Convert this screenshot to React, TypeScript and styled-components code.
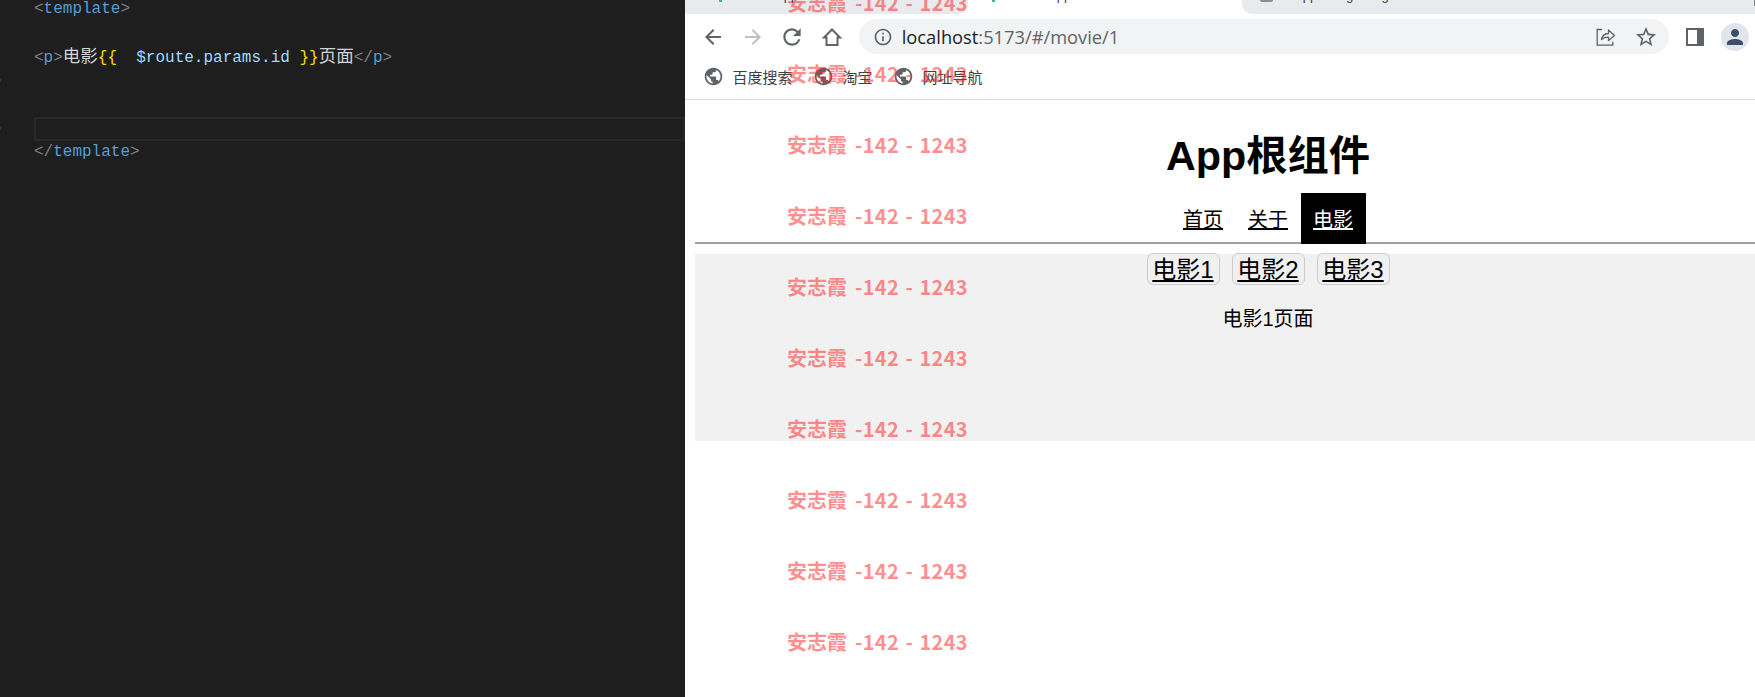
import React from 'react';
import styled, { createGlobalStyle } from 'styled-components';
import { MdArrowBack, MdArrowForward, MdInfoOutline, MdPerson, MdPublic, MdRefresh, MdStarBorder } from 'react-icons/md';

const CJK = '"Noto Sans CJK SC", sans-serif';

const GlobalStyle = createGlobalStyle`
  html, body {
    margin: 0;
    height: 100%;
    overflow: hidden;
    background: #fff;
  }
  #root {
    height: 100%;
  }
`;

const Screen = styled.div`
  position: relative;
  display: flex;
  width: 1755px;
  height: 697px;
  overflow: hidden;
`;

/* code editor */
const Editor = styled.div`
  flex: 0 0 685px;
  background: #1e1e1e;
  padding: 0 0 0 34px;
  box-sizing: border-box;
  font-family: "Liberation Mono", ${CJK};
  font-size: 16px;
  overflow: hidden;
`;

const CodeLines = styled.div`
  margin-top: -2px;
`;

const CodeLine = styled.div<{ $current?: boolean; $mark?: boolean }>`
  position: relative;
  height: 23.8px;
  line-height: 23.8px;
  white-space: pre;
  color: #d4d4d4;
  ${(p) => p.$current && 'outline: 2px solid #282828; outline-offset: -2px;'}
  ${(p) =>
    p.$mark &&
    `&::before {
      content: '';
      position: absolute;
      left: -34px;
      top: 10px;
      width: 1px;
      height: 3px;
      background: #5a2626;
    }`}
`;

const Bracket = styled.span`
  color: #808080;
`;
const Tag = styled.span`
  color: #569cd6;
`;
const Mustache = styled.span`
  color: #ffd700;
`;
const Expr = styled.span`
  color: #9cdcfe;
`;
const Hanzi = styled.span`
  font-size: 17.5px;
`;

/* browser window */
const Browser = styled.div`
  flex: 1;
  min-width: 0;
  display: flex;
  flex-direction: column;
  background: #fff;
  font-family: "Liberation Sans", ${CJK};
`;

const TabStrip = styled.div`
  flex: 0 0 14px;
  display: flex;
  background: #fff;
  overflow: hidden;
`;

const Tab = styled.div<{ $inactive?: boolean; $width: number; $corner?: string }>`
  position: relative;
  flex: 0 0 ${(p) => p.$width}px;
  height: 14px;
  display: flex;
  align-items: flex-start;
  background: ${(p) => (p.$inactive ? '#e8eaed' : 'transparent')};
  border-radius: ${(p) => p.$corner || '0'};
  overflow: hidden;
`;

const TabTail = styled.div`
  flex: 1;
  height: 14px;
  background: #e8eaed;
  border-radius: 0 0 0 10px;
  overflow: hidden;
`;

const TabFavicon = styled.span<{ $offset: number }>`
  flex: none;
  width: 3px;
  height: 2px;
  margin-left: ${(p) => p.$offset}px;
  background: #41b883;
`;

const TabDot = styled.span`
  flex: none;
  width: 13px;
  height: 2px;
  margin-left: 18px;
  border-radius: 0 0 8px 8px;
  background: #8a8d91;
`;

/* only the descenders of the tab titles come into view */
const TabTitle = styled.span<{ $gap: number }>`
  flex: none;
  margin-left: ${(p) => p.$gap}px;
  margin-top: -12px;
  font-size: 13px;
  line-height: 15px;
  color: #3c4043;
  white-space: nowrap;
`;

const TabDivider = styled.span`
  position: absolute;
  right: 0;
  top: 0;
  width: 1px;
  height: 6px;
  background: #80868b;
`;

const Toolbar = styled.div`
  flex: 0 0 40px;
  display: flex;
  align-items: flex-start;
  padding: 5px 0 0 8px;
  box-sizing: border-box;
  height: 40px;
`;

const ToolButton = styled.div<{ $disabled?: boolean }>`
  flex: 0 0 39.7px;
  height: 35px;
  display: flex;
  align-items: center;
  justify-content: center;
  color: ${(p) => (p.$disabled ? '#bdc1c6' : '#5f6368')};
`;

const Omnibox = styled.div`
  flex: 1;
  height: 35px;
  margin-left: 7px;
  margin-right: 7px;
  padding: 0 3px 0 14px;
  display: flex;
  align-items: center;
  border-radius: 18px;
  background: #f1f3f4;
  color: #5f6368;
`;

const Url = styled.div`
  flex: 1;
  margin-left: 9px;
  font-family: "Open Sans", sans-serif;
  font-size: 18.3px;
  color: #5f6368;
  white-space: nowrap;
`;

const Host = styled.span`
  color: #202124;
`;

const Avatar = styled.div`
  width: 28px;
  height: 28px;
  border-radius: 50%;
  background: #e1e4ea;
  color: #3d4c68;
  display: flex;
  align-items: center;
  justify-content: center;
`;

const Bookmarks = styled.div`
  flex: 0 0 46px;
  display: flex;
  align-items: center;
  padding: 0 0 1px 17.5px;
  gap: 20px;
  box-sizing: border-box;
  border-bottom: 1px solid #dadce0;
`;

const Bookmark = styled.div`
  display: flex;
  align-items: center;
  gap: 9px;
  font-size: 15px;
  color: #3c4043;
  svg {
    color: #5f6368;
    flex: none;
  }
`;

const Page = styled.div`
  flex: 1;
  padding-left: 10px;
  overflow: hidden;
`;

const PageInner = styled.div`
  width: 1146px;
  text-align: center;
  color: #000;
`;

const Title = styled.h1`
  margin: 0;
  padding-top: 33px;
  font-size: 41.3px;
  line-height: 46px;
  font-weight: 700;
`;

const Nav = styled.nav`
  position: relative;
  z-index: 1;
  height: 49px;
  margin-top: 14px;
  display: flex;
  justify-content: center;
`;

const NavLink = styled.a<{ $active?: boolean }>`
  height: 51px;
  box-sizing: border-box;
  padding: 14px 12.5px 0;
  font-size: 20px;
  line-height: 26px;
  text-decoration: underline;
  color: ${(p) => (p.$active ? '#fff' : '#000')};
  background: ${(p) => (p.$active ? '#000' : 'transparent')};
`;

const Rule = styled.div`
  height: 2px;
  background: #a0a0a0;
`;

const Section = styled.section`
  height: 187px;
  margin-top: 10px;
  background: #f1f1f1;
`;

const SubNav = styled.div`
  display: flex;
  justify-content: center;
  gap: 12px;
  position: relative;
  top: -1px;
`;

const MovieButton = styled.a`
  box-sizing: border-box;
  width: 73px;
  height: 32px;
  border: 1px solid #ccc;
  border-radius: 6px;
  background: #f0f0f0;
  font-size: 24px;
  line-height: 31px;
  text-decoration: underline;
  color: #000;
`;

const MovieText = styled.p`
  margin: 20px 0 0;
  font-size: 20px;
  line-height: 26px;
  color: #000;
`;

/* repeated watermark lying over everything */
const Watermark = styled.div`
  position: absolute;
  left: 787px;
  top: -33px;
  pointer-events: none;
`;

const WatermarkRow = styled.div`
  height: 71px;
  line-height: 71px;
  font-family: "Noto Sans CJK SC", sans-serif;
  font-size: 20px;
  font-weight: 700;
  white-space: pre;
  word-spacing: 1.5px;
  color: rgba(255, 30, 30, 0.5);
`;

const WatermarkNumber = styled.span`
  margin-left: 2px;
  letter-spacing: 0.3px;
`;

const HomeIcon = () => (
  <svg width="22" height="22" viewBox="0 0 22 22" fill="none" stroke="currentColor" strokeWidth="2">
    <path d="M3 11.5 11 3.5l8 8h-2.500V19h-11v-7.500z" strokeLinejoin="miter" />
  </svg>
);

const ShareIcon = () => (
  <svg width="20" height="20" viewBox="0 0 20 20" fill="none" stroke="currentColor" strokeWidth="1.3">
    <path d="M6 2.500H1.200v15.700h15.600v-3.400" />
    <path d="M5.500 12.500c.6-3.700 3.200-5.800 7-6V3l6 5.500-6 5v-3.300c-3 0-5.300.6-7 2.300z" strokeLinejoin="round" />
  </svg>
);

const PanelIcon = () => (
  <svg width="18" height="18" viewBox="0 0 18 18">
    <path fill="#5f6368" d="M0 0h18v18H0z" />
    <path fill="#fff" d="M2 2h9v14H2z" />
  </svg>
);

const marks = Array.from({ length: 10 }, (_, i) => i);

export default function App() {
  return (
    <>
      <GlobalStyle />
      <Screen>
        <Editor>
          <CodeLines>
            <CodeLine>
              <Bracket>&lt;</Bracket>
              <Tag>template</Tag>
              <Bracket>&gt;</Bracket>
            </CodeLine>
            <CodeLine />
            <CodeLine>
              <Bracket>&lt;</Bracket>
              <Tag>p</Tag>
              <Bracket>&gt;</Bracket>
              <Hanzi>电影</Hanzi>
              <Mustache>{'{{'}</Mustache>
              {'  '}
              <Expr>$route.params.id</Expr> <Mustache>{'}}'}</Mustache>
              <Hanzi>页面</Hanzi>
              <Bracket>&lt;/</Bracket>
              <Tag>p</Tag>
              <Bracket>&gt;</Bracket>
            </CodeLine>
            <CodeLine $mark />
            <CodeLine />
            <CodeLine $current $mark />
            <CodeLine>
              <Bracket>&lt;/</Bracket>
              <Tag>template</Tag>
              <Bracket>&gt;</Bracket>
            </CodeLine>
          </CodeLines>
        </Editor>

        <Browser>
          <TabStrip>
            <Tab $inactive $width={283} $corner="0 0 10px 0">
              <TabFavicon $offset={34} />
              <TabTitle $gap={28}>Vite App</TabTitle>
            </Tab>
            <Tab $width={274}>
              <TabFavicon $offset={24} />
              <TabTitle $gap={28}>Vite App</TabTitle>
            </Tab>
            <TabTail>
              <Tab $width={274}>
                <TabDot />
                <TabTitle $gap={21}>Appearing along</TabTitle>
                <TabDivider />
              </Tab>
            </TabTail>
          </TabStrip>

          <Toolbar>
            <ToolButton>
              <MdArrowBack size={24} />
            </ToolButton>
            <ToolButton $disabled>
              <MdArrowForward size={24} />
            </ToolButton>
            <ToolButton>
              <MdRefresh size={26} />
            </ToolButton>
            <ToolButton>
              <HomeIcon />
            </ToolButton>
            <Omnibox>
              <MdInfoOutline size={20} />
              <Url>
                <Host>localhost</Host>:5173/#/movie/1
              </Url>
              <ToolButton>
                <ShareIcon />
              </ToolButton>
              <ToolButton>
                <MdStarBorder size={24} />
              </ToolButton>
            </Omnibox>
            <ToolButton>
              <PanelIcon />
            </ToolButton>
            <ToolButton>
              <Avatar>
                <MdPerson size={24} />
              </Avatar>
            </ToolButton>
          </Toolbar>

          <Bookmarks>
            <Bookmark>
              <MdPublic size={21} />
              百度搜索
            </Bookmark>
            <Bookmark>
              <MdPublic size={21} />
              淘宝
            </Bookmark>
            <Bookmark>
              <MdPublic size={21} />
              网址导航
            </Bookmark>
          </Bookmarks>

          <Page>
            <PageInner>
              <Title>App根组件</Title>
              <Nav>
                <NavLink>首页</NavLink>
                <NavLink>关于</NavLink>
                <NavLink $active>电影</NavLink>
              </Nav>
              <Rule />
              <Section>
                <SubNav>
                  <MovieButton>电影1</MovieButton>
                  <MovieButton>电影2</MovieButton>
                  <MovieButton>电影3</MovieButton>
                </SubNav>
                <MovieText>电影1页面</MovieText>
              </Section>
            </PageInner>
          </Page>
        </Browser>

        <Watermark>
          {marks.map((i) => (
            <WatermarkRow key={i}>
              安志霞 <WatermarkNumber>-142 - 1243</WatermarkNumber>
            </WatermarkRow>
          ))}
        </Watermark>
      </Screen>
    </>
  );
}
